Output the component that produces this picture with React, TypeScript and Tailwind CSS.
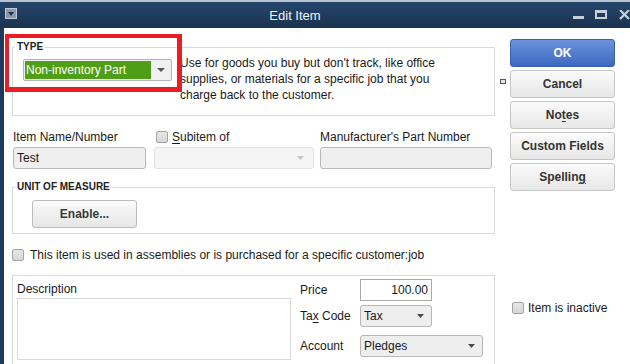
import React from "react";

const Arrow = ({ color = "#4d4d4d", w = 8 }: { color?: string; w?: number }) => (
  <svg width={w} height={4} viewBox={`0 0 ${w} 4`} className="block shrink-0">
    <path d={`M0 0H${w}L${w / 2} 4Z`} fill={color} />
  </svg>
);

const Check = () => (
  <span className="block w-[12px] h-[12px] shrink-0 rounded-[2px] border border-[#a3a3a3] bg-linear-to-b from-[#e6e6e6] to-[#d6d6d6]" />
);

const Btn = ({ children, primary }: { children: React.ReactNode; primary?: boolean }) => (
  <div
    className={
      primary
        ? "h-[28px] rounded-[3px] border border-[#3a5fae] bg-linear-to-b from-[#6a94dc] to-[#3d68c2] text-white font-bold flex items-center justify-center"
        : "h-[28px] rounded-[3px] border border-[#c6c6c6] bg-linear-to-b from-[#fbfbfb] to-[#e7e7e7] text-[#333] font-bold flex items-center justify-center"
    }
  >
    {children}
  </div>
);

const GroupLabel = ({ children }: { children: React.ReactNode }) => (
  <div className="-mt-[6px] ml-[2px] px-[2px] bg-white w-fit text-[10px] leading-[10px] font-bold text-[#222]">
    {children}
  </div>
);

export default function App() {
  return (
    <div className="w-[630px] h-[364px] overflow-hidden bg-white flex flex-col font-['Liberation_Sans',Arial,sans-serif] text-[12px] leading-[14px] text-[#1a1a1a]">
      {/* Title bar */}
      <div className="h-[28px] shrink-0 border-t-2 border-[#b7c3d0] bg-linear-to-b from-[#25476c] to-[#1a3251] flex items-start overflow-hidden">
        <div className="ml-[5px] mt-[6px] w-[12px] h-[11px] shrink-0 border border-[#c3c9d2] bg-[#8d99a8] flex items-center justify-center">
          <svg width="6" height="4" viewBox="0 0 6 4" className="block">
            <path d="M0 0H6L3 4Z" fill="#1c3350" />
          </svg>
        </div>
        <div className="flex-1 mt-[6px] text-center text-[13px] leading-[16px] text-[#f2f4f7]">Edit Item</div>
        <div className="mt-[14px] w-[11px] h-[3px] shrink-0 bg-[#c9cfd7]" />
        <div className="ml-[11px] mt-[8px] w-[12px] h-[9px] shrink-0 border-2 border-t-[3px] border-[#c9cfd7]" />
        <div className="ml-[12px] mt-[8px] w-[11px] h-[10px] shrink-0">
          <svg width="11" height="10" viewBox="0 0 11 10" className="block">
            <path d="M1 0L10 9M10 0L1 9" stroke="#c9cfd7" strokeWidth="2.2" />
          </svg>
        </div>
      </div>

      {/* Body */}
      <div className="flex-1 flex relative">
        <div className="w-[4px] shrink-0 bg-[#1d3b5e]" />
        <div className="flex pl-[8px]">
          {/* Left column */}
          <div className="w-[483px] shrink-0 flex flex-col pt-[19px]">
            {/* TYPE */}
            <div className="h-[69px] border border-[#dadada] flex flex-col">
              <GroupLabel>TYPE</GroupLabel>
              <div className="flex items-start">
                <div className="ml-[10px] mt-[7px] w-[149px] h-[22px] rounded-[2px] border border-[#b4b4b4] bg-[#f0f0f0] p-[1px] flex items-stretch">
                  <div className="w-[126px] bg-[#4f9e18] text-white pl-[1px] flex items-center">Non-inventory Part</div>
                  <div className="flex-1 flex items-center justify-center">
                    <Arrow color="#555" />
                  </div>
                </div>
                <div className="ml-[8px] mt-[3px] leading-[16px] text-[#1a1a1a]">
                  Use for goods you buy but don't track, like office
                  <br />
                  supplies, or materials for a specific job that you
                  <br />
                  charge back to the customer.
                </div>
              </div>
            </div>

            {/* Name row */}
            <div className="mt-[14px] ml-[1px] flex">
              <div className="w-[133px] flex flex-col">
                <div className="h-[14px]">Item Name/Number</div>
                <div className="mt-[3px] h-[22px] rounded-[3px] border border-[#b9b9b9] bg-[#efefef] pl-[3px] flex items-center">
                  Test
                </div>
              </div>
              <div className="ml-[8px] w-[160px] flex flex-col">
                <div className="h-[14px] ml-[2px] flex items-center">
                  <Check />
                  <span className="ml-[4px]">
                    <span className="underline underline-offset-2">S</span>ubitem of
                  </span>
                </div>
                <div className="mt-[3px] h-[22px] rounded-[3px] border border-[#e2e2e2] bg-[#f5f5f5] flex items-center justify-end pr-[9px]">
                  <Arrow color="#c4c4c4" w={7} />
                </div>
              </div>
              <div className="ml-[6px] w-[172px] flex flex-col">
                <div className="h-[14px]">Manufacturer's Part Number</div>
                <div className="mt-[3px] h-[22px] rounded-[3px] border border-[#b9b9b9] bg-[#efefef]" />
              </div>
            </div>

            {/* UNIT OF MEASURE */}
            <div className="mt-[18px] h-[47px] border border-[#dadada] flex flex-col">
              <GroupLabel>UNIT OF MEASURE</GroupLabel>
              <div className="ml-[19px] mt-[8px] w-[105px] h-[28px] rounded-[3px] border border-[#bcbcbc] bg-linear-to-b from-[#fbfbfb] to-[#e6e6e6] text-[#3a3a3a] font-bold flex items-center justify-center">
                Enable...
              </div>
            </div>

            {/* Assemblies checkbox */}
            <div className="mt-[14px] h-[14px] flex items-center">
              <Check />
              <span className="ml-[6px]">This item is used in assemblies or is purchased for a specific customer:job</span>
            </div>

            {/* Bottom group */}
            <div className="mt-[13px] h-[120px] border border-[#dadada] flex items-start">
              <div className="ml-[4px] mt-[6px] w-[274px] flex flex-col">
                <div className="h-[14px]">Description</div>
                <div className="mt-[2px] h-[62px] border border-[#d9d9d9] bg-white" />
              </div>
              <div className="ml-[9px] mt-[3px] flex flex-col">
                <div className="h-[22px] flex items-center">
                  <div className="w-[60px]">Price</div>
                  <div className="w-[72px] h-[22px] border border-[#a9a9a9] bg-white flex items-center justify-end pr-[3px]">
                    100.00
                  </div>
                </div>
                <div className="mt-[4px] h-[22px] flex items-center">
                  <div className="w-[60px]">
                    Ta<span className="underline underline-offset-2">x</span> Code
                  </div>
                  <div className="w-[72px] h-[22px] rounded-[3px] border border-[#b7b7b7] bg-[#eeeeee] pl-[3px] pr-[7px] flex items-center justify-between">
                    <span>Tax</span>
                    <Arrow color="#4a4a4a" w={7} />
                  </div>
                </div>
                <div className="mt-[8px] h-[22px] flex items-center">
                  <div className="w-[60px]">Account</div>
                  <div className="w-[123px] h-[22px] rounded-[3px] border border-[#b7b7b7] bg-[#eeeeee] pl-[3px] pr-[7px] flex items-center justify-between">
                    <span>Pledges</span>
                    <Arrow color="#4a4a4a" w={7} />
                  </div>
                </div>
              </div>
            </div>
          </div>

          {/* small marker */}
          <div className="ml-[5px] mt-[51px] w-[6px] h-[5px] shrink-0 border border-[#555] bg-[#e6e6e6]" />

          {/* Right column */}
          <div className="ml-[4px] w-[105px] shrink-0 flex flex-col pt-[11px]">
            <Btn primary>OK</Btn>
            <div className="mt-[3px]">
              <Btn>Cancel</Btn>
            </div>
            <div className="mt-[3px]">
              <Btn>
                No<span className="underline underline-offset-2">t</span>es
              </Btn>
            </div>
            <div className="mt-[3px]">
              <Btn>Custom Fields</Btn>
            </div>
            <div className="mt-[3px]">
              <Btn>
                Spellin<span className="underline underline-offset-2">g</span>
              </Btn>
            </div>
            <div className="mt-[110px] ml-[2px] h-[14px] flex items-center">
              <Check />
              <span className="ml-[4px] whitespace-nowrap">Item is inactive</span>
            </div>
          </div>
        </div>

        {/* Red annotation box */}
        <div className="absolute left-[5px] top-[6px] w-[177px] h-[58px] border-[#ed1c24] border-t-4 border-l-4 border-r-[5px] border-b-[5px]" />
      </div>
    </div>
  );
}
